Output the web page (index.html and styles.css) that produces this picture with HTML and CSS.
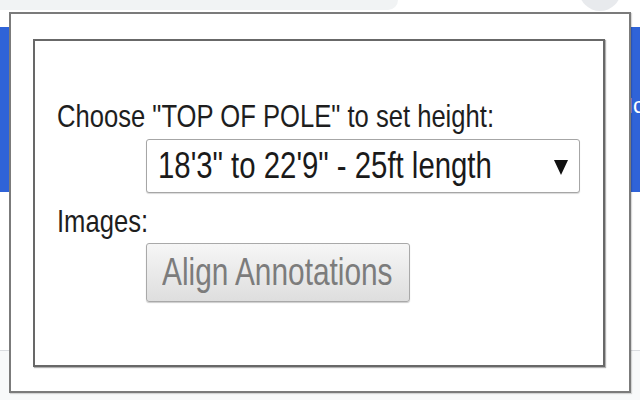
FILE: index.html
```html
<!DOCTYPE html>
<html lang="en">
<head>
    <meta charset="UTF-8">
    <meta name="viewport" content="width=device-width, initial-scale=1.0">
    <title>Pole Height</title>
    <link rel="stylesheet" href="styles.css">
</head>
<body>
    <!-- browser page behind the popup -->
    <div class="backdrop">
        <div class="toolbar">
            <div class="omnibox"></div>
            <div class="avatar"></div>
        </div>
        <div class="banner"><span class="banner-text">Ic</span></div>
        <div class="page-body"></div>
        <div class="page-footer"></div>
    </div>

    <!-- extension popup -->
    <div class="popup">
        <div class="panel">
            <div class="field-label"><span class="squish">Choose "TOP OF POLE" to set height:</span></div>
            <div class="select">
                <span class="squish select-text">18'3" to 22'9" - 25ft length</span>
                <span class="select-arrow"></span>
            </div>
            <div class="field-label images-label"><span class="squish">Images:</span></div>
            <button class="btn" disabled><span class="squish btn-text">Align Annotations</span></button>
        </div>
    </div>
</body>
</html>
```

FILE: styles.css
```css
body {
    margin: 0;
    width: 640px;
    height: 400px;
    overflow: hidden;
    background-color: #fff;
    font-family: "Liberation Sans", Arial, sans-serif;
}
.backdrop {
    display: flex;
    flex-direction: column;
    height: 400px;
}
.toolbar {
    height: 27px;
    display: flex;
    justify-content: space-between;
    overflow: hidden;
}
.omnibox {
    width: 398px;
    height: 10px;
    background-color: #f1f3f4;
    border-bottom-right-radius: 10px;
}
.avatar {
    width: 42px;
    height: 42px;
    margin-top: -31px;
    margin-right: 19px;
    border-radius: 50%;
    background-color: #e8eaed;
}
.banner {
    height: 165px;
    background-color: #2f63d8;
    display: flex;
    justify-content: flex-end;
    overflow: hidden;
}
.banner-text {
    color: #fff;
    font-size: 22px;
    margin-top: 66px;
    margin-right: -4px;
}
.page-body {
    height: 158px;
}
.page-footer {
    flex: 1;
    border-top: 1px solid #dadce0;
    background-color: #f8f9fa;
}
.popup {
    position: absolute;
    top: 12px;
    left: 9px;
    width: 572px;
    height: 328px;
    padding: 25px 24px 24px 22px;
    background-color: #fff;
    border: 2px solid #7b7b7b;
    box-shadow: 1px 1px 1px rgba(0, 0, 0, 0.15);
}
.panel {
    box-sizing: border-box;
    height: 328px;
    padding: 57px 0 0 22px;
    border: 2px solid #686868;
    box-shadow: 1px 1px 1px rgba(0, 0, 0, 0.3);
}
.squish {
    display: inline-block;
    white-space: nowrap;
    transform: scaleX(0.8);
    transform-origin: left center;
}
.field-label {
    font-size: 32px;
    line-height: 36px;
    height: 36px;
    color: #1e1e1e;
}
.images-label {
    margin-top: 10px;
}
.select {
    box-sizing: border-box;
    width: 434px;
    height: 54px;
    margin: 5px 0 0 89px;
    padding: 0 11px 0 11px;
    display: flex;
    align-items: center;
    border: 1px solid #a6a6a6;
    border-radius: 3px;
    box-shadow: 0 1px 1px rgba(0, 0, 0, 0.15);
    background-color: #fff;
    color: #1a1a1a;
    font-size: 36px;
}
.select-text {
    flex: 1;
    width: 0;
    transform: scaleX(0.815);
}
.select-arrow {
    width: 0;
    height: 0;
    margin-top: 2px;
    border-left: 7px solid transparent;
    border-right: 7px solid transparent;
    border-top: 15px solid #111;
}
.btn {
    box-sizing: border-box;
    width: 264px;
    height: 59px;
    margin: 4px 0 0 89px;
    padding: 0 0 0 15px;
    display: block;
    text-align: left;
    border: 1px solid #a9a9a9;
    border-radius: 3px;
    background: linear-gradient(#f6f6f6, #dedede);
    box-shadow: 0 1px 1px rgba(0, 0, 0, 0.2);
    color: #7c7c7c;
    font-family: "Liberation Sans", Arial, sans-serif;
    font-size: 38px;
}
.btn-text {
    transform: scaleX(0.785);
}
```
